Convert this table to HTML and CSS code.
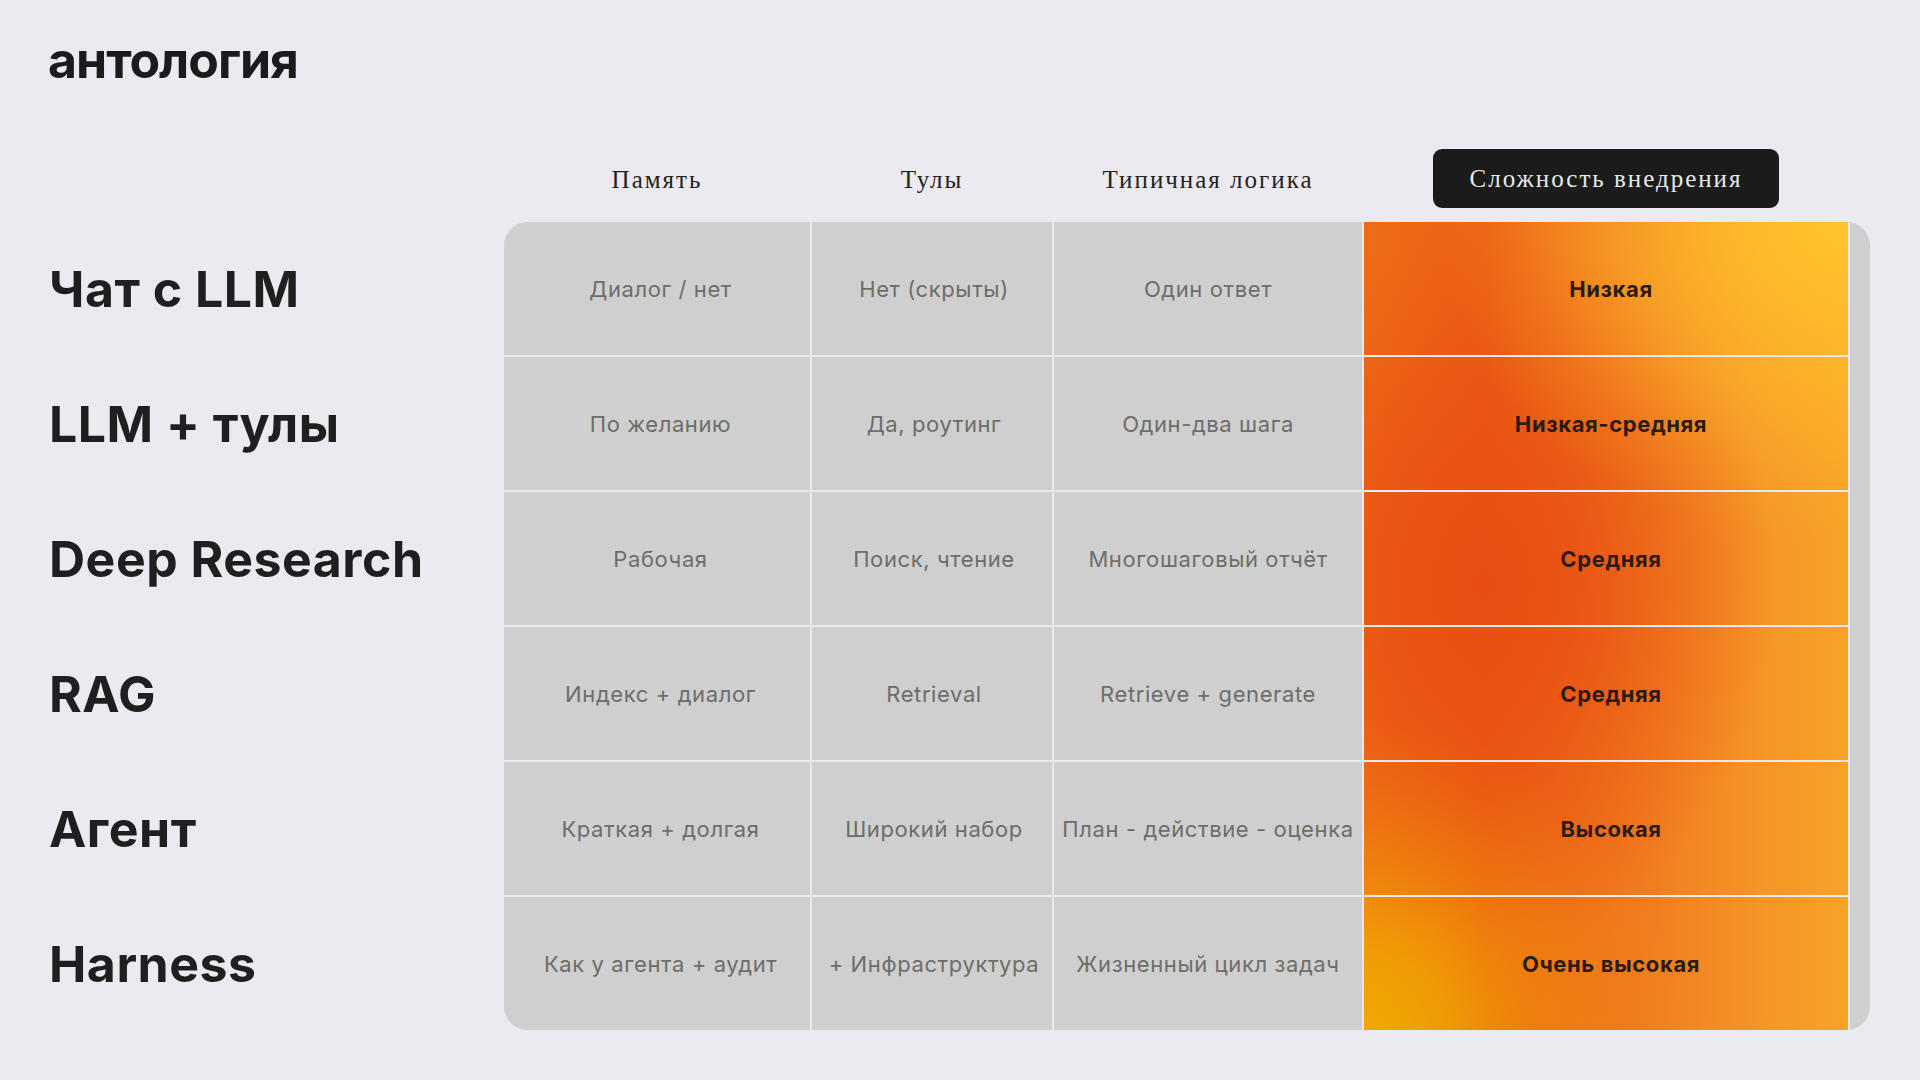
FILE: index.html
```html
<!DOCTYPE html>
<html lang="ru">
<head>
<meta charset="utf-8">
<title>антология</title>
<link rel="stylesheet" href="styles.css">
</head>
<body>
<header class="top">
  <div class="logo">антология</div>
</header>
<main class="board">
  <div class="corner"></div>
  <div class="heads">
    <div class="head">Память</div>
    <div class="head">Тулы</div>
    <div class="head">Типичная логика</div>
    <div class="head"><span class="pill">Сложность внедрения</span></div>
  </div>
  <div class="labels">
    <div class="label">Чат с LLM</div>
    <div class="label">LLM + тулы</div>
    <div class="label">Deep Research</div>
    <div class="label">RAG</div>
    <div class="label">Агент</div>
    <div class="label">Harness</div>
  </div>
  <div class="table">
    <div class="grid">
      <div class="cell c1">Диалог / нет</div>
      <div class="cell c2">Нет (скрыты)</div>
      <div class="cell">Один ответ</div>
      <div class="cell hot h1">Низкая</div>

      <div class="cell c1">По желанию</div>
      <div class="cell c2">Да, роутинг</div>
      <div class="cell">Один-два шага</div>
      <div class="cell hot h2">Низкая-средняя</div>

      <div class="cell c1">Рабочая</div>
      <div class="cell c2">Поиск, чтение</div>
      <div class="cell">Многошаговый отчёт</div>
      <div class="cell hot h3">Средняя</div>

      <div class="cell c1">Индекс + диалог</div>
      <div class="cell c2">Retrieval</div>
      <div class="cell">Retrieve + generate</div>
      <div class="cell hot h4">Средняя</div>

      <div class="cell c1">Краткая + долгая</div>
      <div class="cell c2">Широкий набор</div>
      <div class="cell">План - действие - оценка</div>
      <div class="cell hot h5">Высокая</div>

      <div class="cell c1">Как у агента + аудит</div>
      <div class="cell c2">+ Инфраструктура</div>
      <div class="cell">Жизненный цикл задач</div>
      <div class="cell hot h6">Очень высокая</div>
    </div>
    <div class="spare"></div>
  </div>
</main>
</body>
</html>
```

FILE: styles.css
```css
html, body {
  margin: 0;
  padding: 0;
}
body {
  width: 1920px;
  height: 1080px;
  background: #ebeaf0;
  font-family: Inter, "Noto Sans", "Liberation Sans", sans-serif;
  color: #1e1e1e;
  overflow: hidden;
}

.top {
  padding: 28px 0 0 48px;
  height: 63px;
}
.logo {
  font-family: Inter, "Liberation Sans", sans-serif;
  font-weight: 700;
  font-size: 50px;
  line-height: 64px;
  letter-spacing: -1px;
  color: #1b1b1b;
}

.board {
  margin-top: 58px;
  padding-left: 49px;
  display: grid;
  grid-template-columns: 455px 1366px;
  grid-template-rows: 59px auto;
  row-gap: 14px;
}

.heads {
  display: grid;
  grid-template-columns: 306px 240px 308px 484px;
  column-gap: 2px;
}
.head {
  display: flex;
  align-items: center;
  justify-content: center;
  font-family: "Liberation Serif", serif;
  font-size: 25px;
  letter-spacing: 2px;
  color: #222;
  white-space: nowrap;
  padding-top: 2px;
}
.pill {
  display: flex;
  align-items: center;
  justify-content: center;
  width: 346px;
  height: 59px;
  margin-top: -2px;
  background: #1b1b1b;
  color: #e9e9e9;
  border-radius: 9px;
}

.labels {
  display: flex;
  flex-direction: column;
  gap: 2px;
}
.label {
  height: 133px;
  display: flex;
  align-items: center;
  font-weight: 700;
  font-size: 50px;
  letter-spacing: 0.5px;
  color: #1f1f1f;
  white-space: nowrap;
}

.table {
  display: flex;
  width: 1366px;
  background: #cfcfcf;
  border-radius: 24px;
  overflow: hidden;
}
.grid {
  display: grid;
  grid-template-columns: 306px 240px 308px 484px;
  grid-auto-rows: 133px;
  gap: 2px;
  padding-right: 2px;
  background: #e9e8ee;
}
.spare {
  flex: 1;
  background: #cfcfcf;
}
.cell {
  background: #cfcfcf;
  display: flex;
  align-items: center;
  justify-content: center;
  font-size: 22px;
  letter-spacing: 0.6px;
  color: #6d6d69;
  white-space: nowrap;
}
.c1 { padding-left: 7px; }
.c2 { padding-left: 4px; }
.hot {
  padding-left: 10px;
  font-weight: 700;
  font-size: 22px;
  letter-spacing: 0.6px;
  color: #2a1c12;
  background:
    radial-gradient(ellipse 65% 38% at 0% 100%, rgba(240,168,0,1) 0%, rgba(240,168,0,0.8) 25%, rgba(240,160,0,0.4) 55%, rgba(240,160,0,0.12) 80%, rgba(240,160,0,0) 100%),
    radial-gradient(ellipse 85% 40% at 100% 0%, rgba(255,196,44,1) 0%, rgba(255,194,44,0.8) 25%, rgba(255,194,44,0.45) 55%, rgba(255,194,44,0.15) 80%, rgba(255,194,44,0) 100%),
    radial-gradient(ellipse 60% 45% at 25% 45%, rgba(232,78,18,1) 0%, rgba(232,78,18,0.7) 35%, rgba(232,78,18,0.3) 70%, rgba(232,78,18,0) 100%),
    linear-gradient(90deg, #ef6c17 0%, #ec5e15 25%, #f07c1f 58%, #f59526 82%, #f8a227 100%);
  background-size: 100% 600%;
  background-repeat: no-repeat;
}
.h1 { background-position: 0 0%; }
.h2 { background-position: 0 20%; }
.h3 { background-position: 0 40%; }
.h4 { background-position: 0 60%; }
.h5 { background-position: 0 80%; }
.h6 { background-position: 0 100%; }
```
